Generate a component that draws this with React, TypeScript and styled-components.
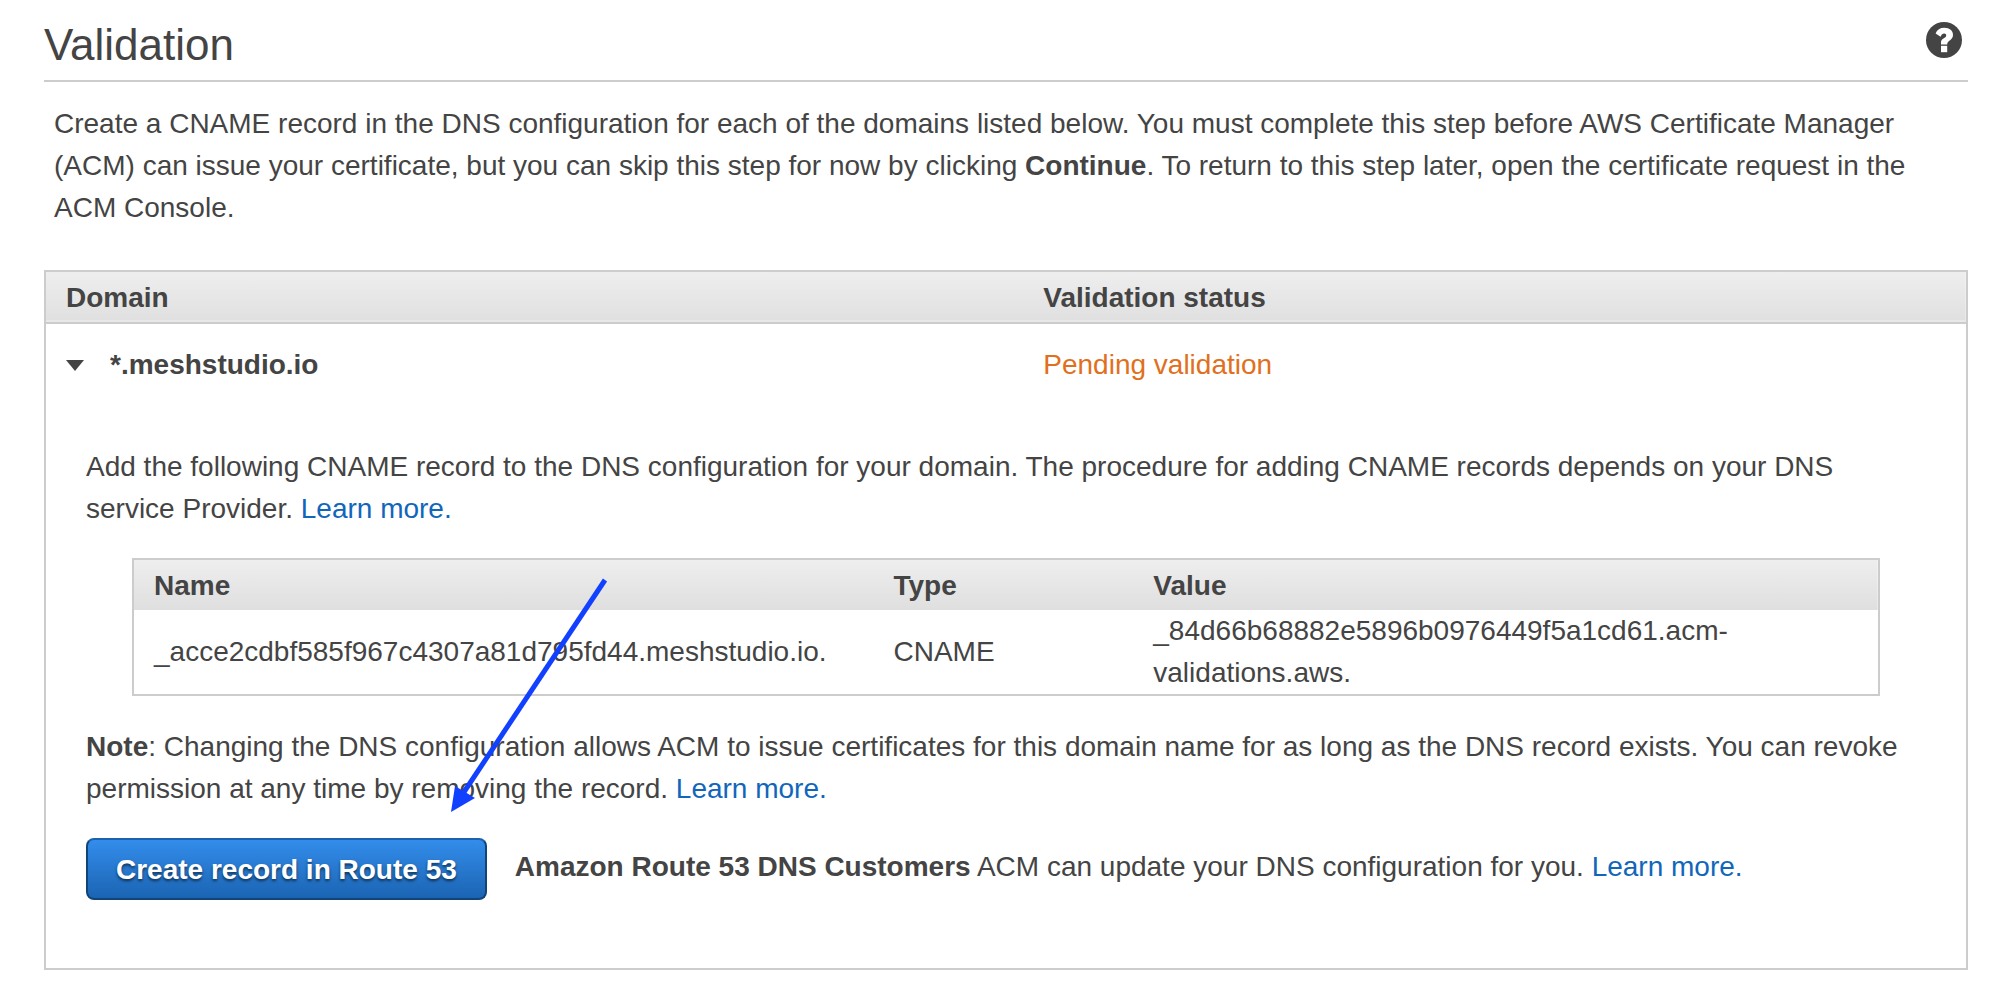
import React, { useState } from "react";
import styled, { createGlobalStyle } from "styled-components";

const GlobalStyle = createGlobalStyle`
  body {
    margin: 0;
    background: #fff;
    color: #444;
    font-family: "Liberation Sans", Arial, sans-serif;
    font-size: 28px;
    line-height: 42px;
  }
`;

const Page = styled.main`
  padding: 17px 46px 26px 44px;
`;

const Header = styled.header`
  display: flex;
  justify-content: space-between;
  align-items: flex-start;
  padding: 0 6px 7px 0;
  border-bottom: 2px solid #ccc;
`;

const Title = styled.h1`
  margin: 0;
  font-size: 44px;
  line-height: 56px;
  font-weight: 400;
`;

const IconButton = styled.button`
  display: flex;
  align-items: center;
  justify-content: center;
  padding: 0;
  border: 0;
  background: none;
  color: inherit;
  cursor: pointer;
`;

const HelpButton = styled(IconButton)`
  margin-top: 5px;
`;

const Intro = styled.p`
  margin: 21px 10px 41px;
`;

const Link = styled.a`
  color: #1166bb;
  text-decoration: none;
`;

const Table = styled.table`
  width: 100%;
  table-layout: fixed;
  border-collapse: separate;
  border-spacing: 0;
  border: 2px solid #ccc;
`;

const HeadCell = styled.th<{ $underlined?: boolean }>`
  padding: 5px 20px 3px;
  text-align: left;
  font-weight: 700;
  border-bottom: ${(p) => (p.$underlined ? "2px solid #ccc" : "0")};
  box-shadow: ${(p) => (p.$underlined ? "inset 0 -2px #e8e8e8" : "none")};
`;

const TableHead = styled.thead`
  background: linear-gradient(#eee, #dfdfdf);
`;

const Cell = styled.td`
  padding: 0 20px;
`;

const DomainCell = styled(Cell)`
  padding-top: 20px;
`;

const DomainName = styled.div`
  display: flex;
  align-items: center;
  gap: 26px;
  font-weight: 700;
`;

const Status = styled.span`
  color: #e07020;
`;

const DetailCell = styled.td`
  padding: 60px 40px 68px;
`;

const Text = styled.p`
  margin: 0;
`;

const RecordArea = styled.div`
  margin: 28px 46px 30px;
`;

const Actions = styled.div`
  position: relative;
  display: flex;
  align-items: flex-start;
  gap: 28px;
  margin-top: 28px;
`;

const ActionText = styled.p`
  margin: 8px 0 0;
`;

const PrimaryButton = styled.button`
  padding: 9px 28px 7px;
  border: 2px solid #114477;
  border-top-color: #1a62b0;
  border-radius: 8px;
  background: linear-gradient(#338deb, #1b64b3);
  color: #fff;
  font: inherit;
  font-weight: 700;
  text-shadow: 0 2px 3px rgba(0, 0, 0, 0.6);
  white-space: nowrap;
  cursor: pointer;
`;

const Pointer = styled.svg`
  position: absolute;
  left: 364px;
  bottom: 88px;
  pointer-events: none;
`;

function HelpIcon() {
  return (
    <svg width="36" height="36" viewBox="0 0 36 36" aria-hidden="true">
      <circle cx="18" cy="18" r="18" fill="#444" />
      <path
        d="M9.6 11.4C11 7.8 14 5.8 18.4 5.8C23.6 5.8 27 8.8 27 13C27 18.2 21.2 18.4 21.2 22.4H15V20.4C15 16 20.2 16.2 20.2 13.4C20.2 12.2 19.4 11.5 18.2 11.5C16.6 11.5 15.6 12.6 14.6 14.8Z"
        fill="#fff"
      />
      <rect x="15" y="23.8" width="6.2" height="6.4" fill="#fff" />
    </svg>
  );
}

function Caret({ open }: { open: boolean }) {
  return (
    <svg width="18" height="11" viewBox="0 0 18 11" aria-hidden="true">
      <path d={open ? "M0 0H18L9 11Z" : "M4 0L14 5L4 11Z"} fill="#444" />
    </svg>
  );
}

const records = [
  {
    name: "_acce2cdbf585f967c4307a81d795fd44.meshstudio.io.",
    type: "CNAME",
    value: "_84d66b68882e5896b0976449f5a1cd61.acm-validations.aws.",
  },
];

const Column = styled.col<{ $width?: string }>`
  width: ${(p) => p.$width ?? "auto"};
`;

function RecordTable() {
  return (
    <Table>
      <colgroup>
        <Column $width="42.4%" />
        <Column $width="14.9%" />
        <Column />
      </colgroup>
      <TableHead>
        <tr>
          <HeadCell scope="col">Name</HeadCell>
          <HeadCell scope="col">Type</HeadCell>
          <HeadCell scope="col">Value</HeadCell>
        </tr>
      </TableHead>
      <tbody>
        {records.map((r) => (
          <tr key={r.name}>
            <Cell>{r.name}</Cell>
            <Cell>{r.type}</Cell>
            <Cell>{r.value}</Cell>
          </tr>
        ))}
      </tbody>
    </Table>
  );
}

export default function App() {
  const [open, setOpen] = useState(true);
  return (
    <Page>
      <GlobalStyle />
      <Header>
        <Title>Validation</Title>
        <HelpButton type="button" aria-label="Help">
          <HelpIcon />
        </HelpButton>
      </Header>
      <Intro>
        Create a CNAME record in the DNS configuration for each of the domains listed below. You must complete this
        step before AWS Certificate Manager (ACM) can issue your certificate, but you can skip this step for now by
        clicking <strong>Continue</strong>. To return to this step later, open the certificate request in the ACM
        Console.
      </Intro>
      <Table>
        <colgroup>
          <Column $width="50.9%" />
          <Column />
        </colgroup>
        <TableHead>
          <tr>
            <HeadCell scope="col" $underlined>Domain</HeadCell>
            <HeadCell scope="col" $underlined>Validation status</HeadCell>
          </tr>
        </TableHead>
        <tbody>
          <tr>
            <DomainCell>
              <DomainName>
                <IconButton
                  type="button"
                  aria-label="Toggle details"
                  aria-expanded={open}
                  onClick={() => setOpen(!open)}
                >
                  <Caret open={open} />
                </IconButton>
                *.meshstudio.io
              </DomainName>
            </DomainCell>
            <DomainCell>
              <Status>Pending validation</Status>
            </DomainCell>
          </tr>
          {open && (
            <tr>
              <DetailCell colSpan={2}>
                <Text>
                  Add the following CNAME record to the DNS configuration for your domain. The procedure for adding
                  CNAME records depends on your DNS service Provider. <Link href="#cname">Learn more.</Link>
                </Text>
                <RecordArea>
                  <RecordTable />
                </RecordArea>
                <Text>
                  <strong>Note</strong>: Changing the DNS configuration allows ACM to issue certificates for this
                  domain name for as long as the DNS record exists. You can revoke permission at any time by removing
                  the record. <Link href="#note">Learn more.</Link>
                </Text>
                <Actions>
                  <PrimaryButton type="button">Create record in Route 53</PrimaryButton>
                  <ActionText>
                    <strong>Amazon Route 53 DNS Customers</strong> ACM can update your DNS configuration for you.{" "}
                    <Link href="#route53">Learn more.</Link>
                  </ActionText>
                  <Pointer width="160" height="236" viewBox="0 0 160 236" aria-hidden="true">
                    <path d="M155 4L14 216" stroke="#1240ff" strokeWidth="5" />
                    <path d="M1 236L5 210L25 222Z" fill="#1240ff" />
                  </Pointer>
                </Actions>
              </DetailCell>
            </tr>
          )}
        </tbody>
      </Table>
    </Page>
  );
}
